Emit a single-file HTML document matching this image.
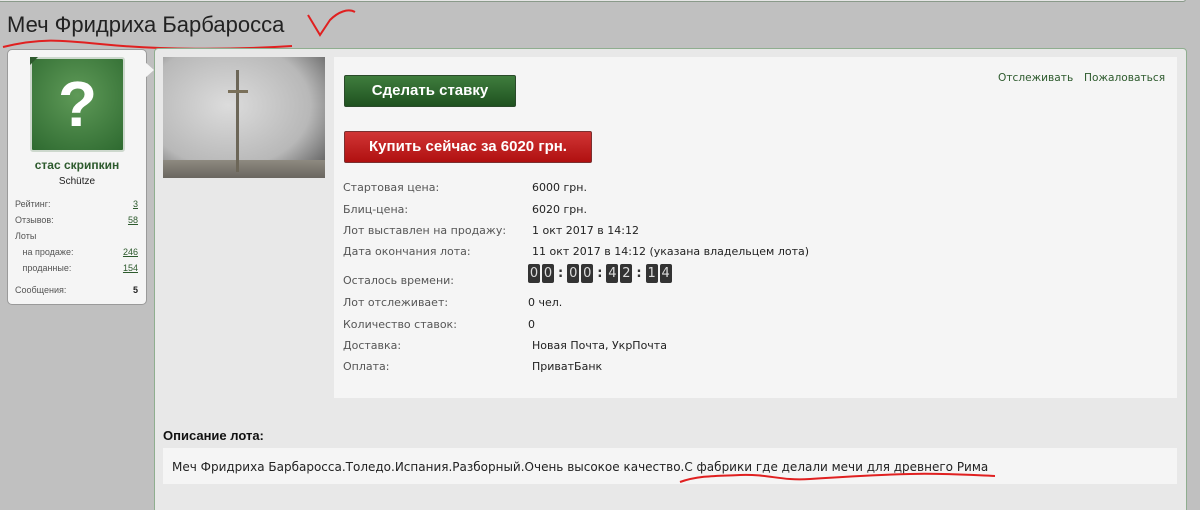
<!DOCTYPE html>
<html><head><meta charset="utf-8"><style>
html,body{margin:0;width:1200px;height:510px;overflow:hidden}
body{background:#c0c0c0;font-family:"Liberation Sans",sans-serif;position:relative}
.abs{position:absolute}
.t{font-size:11px;color:#555;font-family:"DejaVu Sans",sans-serif}
.v{font-size:11px;color:#222;font-family:"DejaVu Sans",sans-serif}
a{color:#2d5a2d;text-decoration:underline}
.d{background:#333;width:12px;height:19px;border-radius:2px;display:inline-block;text-align:center;line-height:19px}
</style></head><body>
<div class="abs" style="left:-2px;top:-8px;width:1186px;height:9px;border:1px solid #8a9a8a;border-top:none;background:#e6e6e6;border-radius:0 0 3px 3px"></div>
<div class="abs" style="left:7px;top:12px;font-size:22px;color:#222">Меч Фридриха Барбаросса</div>
<svg class="abs" style="left:0;top:0" width="360" height="60"><path d="M3 47 C40 38,60 40,100 44 C160 50,230 50,292 46" stroke="#e02020" stroke-width="2" fill="none"/><path d="M308 15 L320 35 L330 20 C338 12,348 8,355 12" stroke="#e02020" stroke-width="2" fill="none"/></svg>
<div class="abs" style="left:154px;top:48px;width:1031px;height:470px;background:#e8e8e8;border:1px solid #8fae8f;border-radius:4px"></div>
<div class="abs" style="left:7px;top:49px;width:138px;height:254px;background:#f5f5f5;border:1px solid #9a9a9a;border-radius:5px"></div>
<div class="abs" style="left:145px;top:62px;width:0;height:0;border:8px solid transparent;border-left-color:#f5f5f5;border-width:8px 0 8px 9px"></div>
<div class="abs" style="left:30px;top:57px;width:91px;height:91px;border:2px solid #cdd8cd;border-radius:3px;background:radial-gradient(circle at 50% 40%,#5f9a58,#2e6a30);"></div>
<div class="abs" style="left:30px;top:57px;width:0;height:0;border-top:8px solid #2e5a2e;border-right:8px solid transparent"></div>
<div class="abs" style="left:30px;top:72px;width:95px;text-align:center;font-size:64px;font-weight:bold;color:#fff;line-height:64px">?</div>
<div class="abs" style="left:7px;top:158px;width:140px;text-align:center;font-size:12px;font-weight:bold;color:#2d5a2d">стас скрипкин</div>
<div class="abs" style="left:7px;top:176px;width:140px;text-align:center;font-size:10px;color:#222">Schütze</div>
<div class="abs" style="left:15px;top:196px;width:123px;font-size:9px;color:#555;line-height:16px">
<div>Рейтинг:<a style="float:right">3</a></div>
<div>Отзывов:<a style="float:right">58</a></div>
<div>Лоты</div>
<div>&nbsp;&nbsp;&nbsp;на продаже:<a style="float:right">246</a></div>
<div>&nbsp;&nbsp;&nbsp;проданные:<a style="float:right">154</a></div>
<div style="margin-top:6px">Сообщения:<b style="float:right;color:#222">5</b></div>
</div>
<div class="abs" style="left:163px;top:57px;width:162px;height:121px;background:radial-gradient(ellipse at 40% 40%,#dcdcdc,#b8b8b8 60%,#4a4a4a);"></div>
<div class="abs" style="left:163px;top:160px;width:162px;height:18px;background:linear-gradient(#8e8a80,#6a6660)"></div>
<div class="abs" style="left:236px;top:70px;width:3px;height:102px;background:#6c6658"></div>
<div class="abs" style="left:228px;top:90px;width:20px;height:3px;background:#7a705a"></div>
<div class="abs" style="left:334px;top:57px;width:843px;height:341px;background:#f5f5f5"></div>
<div class="abs" style="left:344px;top:75px;width:170px;height:30px;background:linear-gradient(#3f7d3d,#1f5220);border:1px solid #2a4a2a;border-radius:2px;color:#fff;font-weight:bold;font-size:15px;text-align:center;line-height:30px">Сделать ставку</div>
<div class="abs" style="left:344px;top:131px;width:246px;height:30px;background:linear-gradient(#d03535,#b01010);border:1px solid #7a3030;border-radius:2px;color:#fff;font-weight:bold;font-size:15px;text-align:center;line-height:30px">Купить сейчас за 6020 грн.</div>
<div class="abs v" style="left:998px;top:72px;color:#2d5a2d;font-size:10.6px">Отслеживать</div>
<div class="abs v" style="left:1084px;top:72px;color:#2d5a2d;font-size:10.6px">Пожаловаться</div>
<div class="abs t" style="left:343px;top:181px">Стартовая цена:</div><div class="abs v" style="left:532px;top:181px">6000 грн.</div>
<div class="abs t" style="left:343px;top:203px">Блиц-цена:</div><div class="abs v" style="left:532px;top:203px">6020 грн.</div>
<div class="abs t" style="left:343px;top:224px">Лот выставлен на продажу:</div><div class="abs v" style="left:532px;top:224px">1 окт 2017 в 14:12</div>
<div class="abs t" style="left:343px;top:245px">Дата окончания лота:</div><div class="abs v" style="left:532px;top:245px">11 окт 2017 в 14:12 (указана владельцем лота)</div>
<div class="abs t" style="left:343px;top:274px">Осталось времени:</div>
<div class="abs" style="left:528px;top:264px;display:flex;gap:2px;font-size:13px;color:#ddd;align-items:center;font-family:'DejaVu Sans',sans-serif">
<span class="d">0</span><span class="d">0</span><b style="color:#333;margin:0 2px">:</b><span class="d">0</span><span class="d">0</span><b style="color:#333;margin:0 2px">:</b><span class="d">4</span><span class="d">2</span><b style="color:#333;margin:0 2px">:</b><span class="d">1</span><span class="d">4</span></div>
<div class="abs t" style="left:343px;top:296px">Лот отслеживает:</div><div class="abs v" style="left:528px;top:296px">0 чел.</div>
<div class="abs t" style="left:343px;top:318px">Количество ставок:</div><div class="abs v" style="left:528px;top:318px">0</div>
<div class="abs t" style="left:343px;top:339px">Доставка:</div><div class="abs v" style="left:532px;top:339px">Новая Почта, УкрПочта</div>
<div class="abs t" style="left:343px;top:360px">Оплата:</div><div class="abs v" style="left:532px;top:360px">ПриватБанк</div>
<div class="abs" style="left:163px;top:428px;font-size:13px;font-weight:bold;color:#111">Описание лота:</div>
<div class="abs" style="left:163px;top:448px;width:1014px;height:36px;background:#f5f5f5"></div>
<div class="abs" style="left:172px;top:460px;font-size:12px;color:#222;font-family:'DejaVu Sans',sans-serif">Меч Фридриха Барбаросса.Толедо.Испания.Разборный.Очень высокое качество.С фабрики где делали мечи для древнего Рима</div>
<svg class="abs" style="left:670px;top:470px" width="340" height="20"><path d="M10 12 C30 5,50 6,70 5 C100 4,110 11,140 9 C170 7,200 5,240 4 C270 3,300 5,325 6" stroke="#e02020" stroke-width="2" fill="none"/></svg>
</body></html>
